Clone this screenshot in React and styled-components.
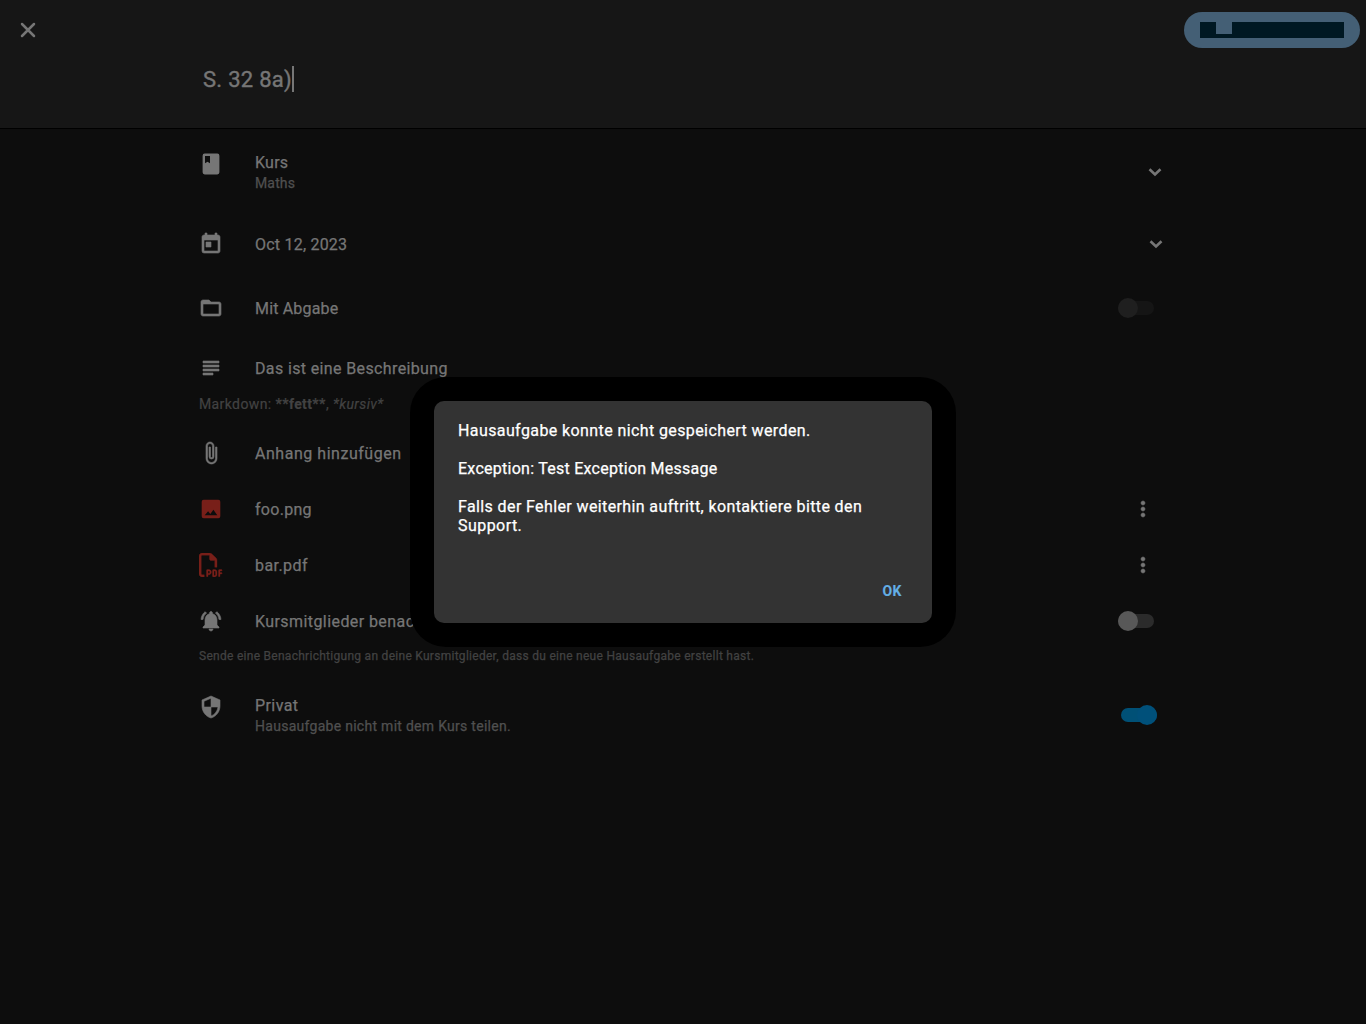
import React from "react";
import styled, { createGlobalStyle, css } from "styled-components";
import {
  MdToday, MdFolderOpen, MdSubject, MdAttachFile,
  MdNotificationsActive, MdSecurity, MdMoreVert,
} from "react-icons/md";
import { FaRegFilePdf } from "react-icons/fa6";

const Global = createGlobalStyle`
  * { box-sizing: border-box; }
  body { margin: 0; background: #0d0d0d; overflow: hidden; }
  p { margin: 0; }
`;
const Page = styled.div`
  height: 1024px;
  font-family: Roboto, "Liberation Sans", sans-serif;
  color: #767676;
`;
const Header = styled.header`
  height: 129px;
  background: #161616;
  border-bottom: 1px solid #000;
`;
const HeaderBar = styled.div`
  height: 60px;
  padding: 0 6px 0 16px;
  display: flex;
  align-items: center;
  justify-content: space-between;
`;
const IconButton = styled.button`
  border: 0; padding: 0; background: none; color: inherit;
  width: 24px; height: 24px; display: flex; align-items: center; justify-content: center;
`;
const SaveButton = styled.button`
  width: 176px; height: 36px; border: 0; border-radius: 18px;
  padding: 10px 16px; background: #445f75;
  display: flex;
`;
const SaveLabel = styled.span`
  width: 144px; height: 16px; background: #001822;
  display: flex; padding-left: 16px;
`;
const SaveGap = styled.span`width: 16px; height: 12px; background: #445f75;`;
const TitleField = styled.div`
  display: flex; align-items: flex-start; height: 28px; margin: 6px 0 0 203px;
`;
const Cursor = styled.span`width: 2px; height: 26px; background: #767676;`;

const Text = styled.span`
  display: inline-block;
  white-space: pre;
  font-size: ${(p) => p.$size || 16}px;
  line-height: ${(p) => p.$line || 20}px;
  font-weight: ${(p) => p.$weight || 400};
  letter-spacing: ${(p) => p.$track || 0}px;
  color: ${(p) => p.$color || "inherit"};
  -webkit-text-stroke: ${(p) => p.$stroke || 0.25}px currentColor;
`;
const List = styled.main`
  width: 968px; margin: 0 auto; display: flex; flex-direction: column;
`;
const Row = styled.div`
  height: ${(p) => p.$h}px;
  display: flex;
  align-items: ${(p) => (p.$top ? "flex-start" : "center")};
  padding-right: ${(p) => p.$end || 0}px;
  ${(p) => p.$top && css`padding-top: ${p.$top}px;`}
`;
const Leading = styled.span`
  width: 56px; height: 24px; flex: none; display: flex;
  color: ${(p) => p.$color || "inherit"};
  svg {
    stroke-width: ${(p) => (p.$bold === undefined ? 0.6 : p.$bold)};
    stroke-linejoin: round;
  }
  path[fill="none"] { stroke: none; }
`;
const Body = styled.div`
  flex: 1; display: flex; flex-direction: column; align-items: flex-start;
  padding-top: ${(p) => (p.$stacked ? 0 : 2)}px;
`;
const Hint = styled.p`height: ${(p) => p.$h}px; display: flex; align-items: flex-start;`;
const Trailing = styled.span`
  display: flex; margin-top: ${(p) => p.$drop || 0}px; margin-right: ${(p) => p.$shift || 0}px;
`;
const More = styled(MdMoreVert)`
  stroke-width: 0.5;
  path[fill="none"] { stroke: none; }
`;

const Track = styled.span`
  width: 36px; height: 14px; border-radius: 7px; flex: none;
  display: flex; align-items: center;
  justify-content: ${(p) => (p.$on ? "flex-end" : "flex-start")};
  background: ${(p) => p.$track};
`;
const Thumb = styled.span`
  width: 20px; height: 20px; flex: none; border-radius: 50%; background: ${(p) => p.$color};
`;
const Switch = ({ on, track, thumb }) => (
  <Track $on={on} $track={track}><Thumb $color={thumb} /></Track>
);

const Overlay = styled.div`
  position: absolute; left: 0; top: 0; width: 1366px; height: 1024px;
  display: flex; align-items: center; justify-content: center;
`;
const DialogFrame = styled.div`
  width: 546px; height: 270px; padding: 24px; border-radius: 36px; background: #000;
`;
const Dialog = styled.div`
  height: 222px; border-radius: 10px; background: #333; color: #fff;
  padding: 20px 24px 22px; display: flex; flex-direction: column;
`;
const Message = styled.div`
  flex: 1; display: flex; flex-direction: column; gap: 19px;
`;
const Paragraph = styled.p`display: flex; flex-direction: column; align-items: flex-start;`;
const Actions = styled.div`display: flex; justify-content: flex-end; padding-right: 6px;`;

const Close = () => (
  <svg width="24" height="24" viewBox="0 0 24 24" fill="none" stroke="currentColor" strokeWidth="2.5" strokeLinecap="round">
    <path d="M6 6 18 18M18 6 6 18" />
  </svg>
);
const Chevron = () => (
  <svg width="24" height="24" viewBox="0 0 24 24" fill="none" stroke="currentColor" strokeWidth="2.6">
    <path d="M6.500 9.200 12 14.500 17.500 9.200" />
  </svg>
);
const BookIcon = () => (
  <svg width="24" height="24" viewBox="0 0 24 24" fill="currentColor" fillRule="evenodd">
    <path d="M5.7 1.6h12.6a2.1 2.1 0 0 1 2.1 2.1v16.6a2.1 2.1 0 0 1-2.1 2.1H5.7a2.1 2.1 0 0 1-2.1-2.1V3.7a2.1 2.1 0 0 1 2.1-2.1zM6 4v7.2l2.5-1.5 2.500 1.500V4z" />
  </svg>
);
const ImageIcon = () => (
  <svg width="24" height="24" viewBox="0 0 24 24" fill="currentColor" fillRule="evenodd">
    <path d="M4.7 2.7h14.6a2 2 0 0 1 2 2v14.6a2 2 0 0 1-2 2H4.7a2 2 0 0 1-2-2V4.7a2 2 0 0 1 2-2zM5.7 18.2h12.6l-3.9-5.5-3.1 4.2-2.2-2.7z" />
  </svg>
);

export default function App() {
  return (
    <Page>
      <Global />
      <Header>
        <HeaderBar>
          <IconButton><Close /></IconButton>
          <SaveButton><SaveLabel><SaveGap /></SaveLabel></SaveButton>
        </HeaderBar>
        <TitleField><Text $size={22} $line={28} $track={0.28} $stroke={0.4}>S. 32 8a)</Text><Cursor /></TitleField>
      </Header>
      <List>
        <Row $h={83} $top={23}>
          <Leading $bold={0}><BookIcon /></Leading>
          <Body $stacked>
            <Text $line={22} $track={0.25}>Kurs</Text>
            <Text $size={14} $line={18} $track={0.15} $color="#505050">Maths</Text>
          </Body>
          <Trailing $drop={8}><Chevron /></Trailing>
        </Row>
        <Row $h={64}>
          <Leading><MdToday size={24} /></Leading>
          <Body><Text $track={0.22}>Oct 12, 2023</Text></Body>
          <Trailing $shift={-1}><Chevron /></Trailing>
        </Row>
        <Row $h={64} $end={13}>
          <Leading><MdFolderOpen size={24} /></Leading>
          <Body><Text $track={0.17}>Mit Abgabe</Text></Body>
          <Switch track="#151515" thumb="#1f1f1f" />
        </Row>
        <Row $h={54} $top={16}>
          <Leading><MdSubject size={24} /></Leading>
          <Body $stacked><Text $line={26} $track={0.37}>Das ist eine Beschreibung</Text></Body>
        </Row>
        <Hint $h={31}>
          <Text $size={14} $track={0.39} $stroke={0.2} $color="#424242">Markdown: <b>**fett**</b>, <i>*kursiv*</i></Text>
        </Hint>
        <Row $h={56}>
          <Leading><MdAttachFile size={24} /></Leading>
          <Body><Text $track={0.53}>Anhang hinzufügen</Text></Body>
        </Row>
        <Row $h={56} $end={12}>
          <Leading $color="#781f19" $bold={0}><ImageIcon /></Leading>
          <Body><Text $track={0.29}>foo.png</Text></Body>
          <More size={24} />
        </Row>
        <Row $h={56} $end={12}>
          <Leading $color="#781f19" $bold={7}><FaRegFilePdf size={24} /></Leading>
          <Body><Text $track={0.43}>bar.pdf</Text></Body>
          <More size={24} />
        </Row>
        <Row $h={56} $end={13}>
          <Leading><MdNotificationsActive size={24} /></Leading>
          <Body><Text $track={0.42}>Kursmitglieder benachrichtigen</Text></Body>
          <Switch track="#2b2b2b" thumb="#585858" />
        </Row>
        <Hint $h={32}>
          <Text $size={12} $line={14} $track={0.28} $color="#424242">Sende eine Benachrichtigung an deine Kursmitglieder, dass du eine neue Hausaufgabe erstellt hast.</Text>
        </Hint>
        <Row $h={72} $top={14} $end={10}>
          <Leading><MdSecurity size={24} /></Leading>
          <Body $stacked>
            <Text $line={22} $track={0.42}>Privat</Text>
            <Text $size={14} $line={18} $track={0.28} $color="#505050">Hausaufgabe nicht mit dem Kurs teilen.</Text>
          </Body>
          <Trailing $drop={13}><Switch on track="#005076" thumb="#00507a" /></Trailing>
        </Row>
      </List>
      <Overlay>
        <DialogFrame>
          <Dialog>
            <Message>
              <Paragraph><Text $line={19} $track={0.4}>Hausaufgabe konnte nicht gespeichert werden.</Text></Paragraph>
              <Paragraph><Text $line={19} $track={0.26}>Exception: Test Exception Message</Text></Paragraph>
              <Paragraph>
                <Text $line={19} $track={0.385}>Falls der Fehler weiterhin auftritt, kontaktiere bitte den</Text>
                <Text $line={19} $track={0.45}>Support.</Text>
              </Paragraph>
            </Message>
            <Actions><Text $size={14} $weight={700} $stroke={0.1} $track={0.5} $color="#63aee5">OK</Text></Actions>
          </Dialog>
        </DialogFrame>
      </Overlay>
    </Page>
  );
}
